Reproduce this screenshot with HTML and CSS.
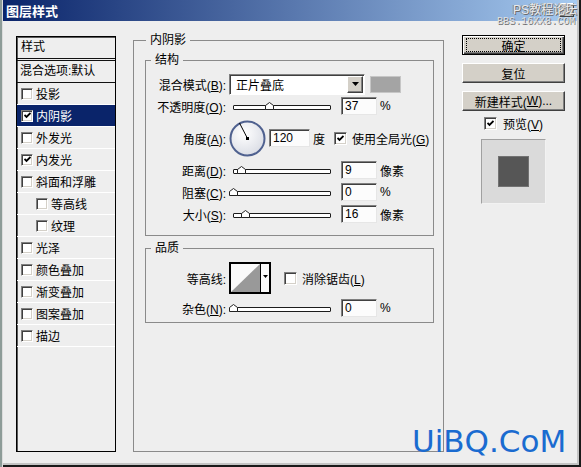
FILE: index.html
```html
<!DOCTYPE html>
<html lang="zh-CN">
<head>
    <meta charset="UTF-8">
    <title>图层样式</title>
    <link rel="stylesheet" href="styles.css">
</head>
<body>
    <div class="window">
        <div class="titlebar">
            <span class="title">图层样式</span>
        </div>

        <div class="dialog">
            <!-- 左侧样式列表 -->
            <div class="style-list">
                <div class="list-head">样式</div>
                <div class="list-blend">混合选项:默认</div>
                <div class="list-item"><span class="cb"></span>投影</div>
                <div class="list-item active"><span class="cb checked"><svg viewBox="0 0 7 7"><polyline points="0.5,3 2.5,5 6.5,1"/></svg></span>内阴影</div>
                <div class="list-item"><span class="cb"></span>外发光</div>
                <div class="list-item"><span class="cb checked"><svg viewBox="0 0 7 7"><polyline points="0.5,3 2.5,5 6.5,1"/></svg></span>内发光</div>
                <div class="list-item"><span class="cb"></span>斜面和浮雕</div>
                <div class="list-item sub"><span class="cb"></span>等高线</div>
                <div class="list-item sub"><span class="cb"></span>纹理</div>
                <div class="list-item"><span class="cb"></span>光泽</div>
                <div class="list-item"><span class="cb"></span>颜色叠加</div>
                <div class="list-item"><span class="cb"></span>渐变叠加</div>
                <div class="list-item"><span class="cb"></span>图案叠加</div>
                <div class="list-item"><span class="cb"></span>描边</div>
            </div>

            <!-- 中间参数面板 -->
            <fieldset class="group main">
                <legend>内阴影</legend>

                <fieldset class="group structure">
                    <legend>结构</legend>

                    <div class="row">
                        <span class="lbl">混合模式(<u>B</u>):</span>
                        <div class="select">
                            <span class="select-text">正片叠底</span>
                            <span class="drop"><svg width="7" height="4" viewBox="0 0 7 4"><polygon points="0,0 7,0 3.5,4"/></svg></span>
                        </div>
                        <span class="swatch"></span>
                    </div>

                    <div class="row">
                        <span class="lbl">不透明度(<u>O</u>):</span>
                        <div class="slider"><div class="track"></div><svg class="thumb" style="left:36px" viewBox="0 0 9 8"><polygon points="0.5,3.5 4.5,0.5 8.5,3.5 8.5,7.5 0.5,7.5"/></svg></div>
                        <span class="num">37</span>
                        <span class="unit">%</span>
                    </div>

                    <div class="row angle-row">
                        <span class="lbl">角度(<u>A</u>):</span>
                        <svg class="dial" width="37" height="37" viewBox="0 0 37 37">
                            <defs>
                                <radialGradient id="dialFill" cx="40%" cy="35%" r="70%">
                                    <stop offset="0" stop-color="#ffffff"/>
                                    <stop offset="1" stop-color="#d9dce4"/>
                                </radialGradient>
                            </defs>
                            <circle cx="18.5" cy="18.5" r="17" fill="url(#dialFill)" stroke="#4f618f" stroke-width="2"/>
                            <line x1="18.5" y1="18.5" x2="10.5" y2="3" stroke="#000" stroke-width="1"/>
                            <rect x="17" y="17" width="3" height="3" fill="#000"/>
                        </svg>
                        <span class="num wide">120</span>
                        <span class="unit">度</span>
                        <span class="cb checked global"><svg viewBox="0 0 7 7"><polyline points="0.5,3 2.5,5 6.5,1"/></svg></span>
                        <span class="cb-text">使用全局光(<u>G</u>)</span>
                    </div>

                    <div class="row">
                        <span class="lbl">距离(<u>D</u>):</span>
                        <div class="slider"><div class="track"></div><svg class="thumb" style="left:8px" viewBox="0 0 9 8"><polygon points="0.5,3.5 4.5,0.5 8.5,3.5 8.5,7.5 0.5,7.5"/></svg></div>
                        <span class="num">9</span>
                        <span class="unit">像素</span>
                    </div>

                    <div class="row">
                        <span class="lbl">阻塞(<u>C</u>):</span>
                        <div class="slider"><div class="track"></div><svg class="thumb" style="left:0px" viewBox="0 0 9 8"><polygon points="0.5,3.5 4.5,0.5 8.5,3.5 8.5,7.5 0.5,7.5"/></svg></div>
                        <span class="num">0</span>
                        <span class="unit">%</span>
                    </div>

                    <div class="row">
                        <span class="lbl">大小(<u>S</u>):</span>
                        <div class="slider"><div class="track"></div><svg class="thumb" style="left:12px" viewBox="0 0 9 8"><polygon points="0.5,3.5 4.5,0.5 8.5,3.5 8.5,7.5 0.5,7.5"/></svg></div>
                        <span class="num">16</span>
                        <span class="unit">像素</span>
                    </div>
                </fieldset>

                <fieldset class="group quality">
                    <legend>品质</legend>

                    <div class="row contour-row">
                        <span class="lbl">等高线:</span>
                        <svg class="contour" width="42" height="32" viewBox="0 0 42 32">
                            <rect x="1" y="1" width="40" height="30" fill="#fafafa" stroke="#000" stroke-width="2"/>
                            <polygon points="2,30 31,2 31,30" fill="#999"/>
                            <line x1="31.5" y1="1" x2="31.5" y2="31" stroke="#000"/>
                            <polygon points="34,13 39,13 36.5,16" fill="#000"/>
                        </svg>
                        <span class="cb antialias"></span>
                        <span class="cb-text">消除锯齿(<u>L</u>)</span>
                    </div>

                    <div class="row noise-row">
                        <span class="lbl">杂色(<u>N</u>):</span>
                        <div class="slider"><div class="track"></div><svg class="thumb" style="left:0px" viewBox="0 0 9 8"><polygon points="0.5,3.5 4.5,0.5 8.5,3.5 8.5,7.5 0.5,7.5"/></svg></div>
                        <span class="num">0</span>
                        <span class="unit">%</span>
                    </div>
                </fieldset>
            </fieldset>

            <!-- 右侧按钮 -->
            <div class="side">
                <div class="btn btn-default"><span class="focus">确定</span></div>
                <div class="btn">复位</div>
                <div class="btn">新建样式(<u>W</u>)...</div>
                <div class="preview-check">
                    <span class="cb checked"><svg viewBox="0 0 7 7"><polyline points="0.5,3 2.5,5 6.5,1"/></svg></span>
                    <span>预览(<u>V</u>)</span>
                </div>
                <div class="preview">
                    <div class="preview-swatch"></div>
                </div>
            </div>
        </div>

        <!-- 水印 -->
        <span class="close-box"></span>
        <span class="mark-top">PS教程论坛</span>
        <span class="mark-bbs">BBS.16XX8.COM</span>
        <span class="mark-uibq">UiBQ.CoM</span>
    </div>
</body>
</html>
```

FILE: styles.css
```css
body {
    margin: 0;
    font-family: "Liberation Sans", "Noto Sans CJK SC", sans-serif;
    font-size: 12px;
    color: #000;
}

.window {
    position: relative;
    width: 581px;
    height: 467px;
    box-sizing: border-box;
    padding: 0 4px 4px 0;
    border-left: 2px solid #8d9c98;
    background: #eeeeee;
    box-shadow: inset 1px 0 0 #dcdcdc, inset -2px -2px 0 #1a1a1a, inset -4px -4px 0 #c4c4c4;
    display: flex;
    flex-direction: column;
    overflow: hidden;
}

.titlebar {
    height: 21px;
    margin-left: 1px;
    padding-left: 3px;
    display: flex;
    align-items: center;
    background: linear-gradient(to right, #0a246a, #a6caf0);
    color: #fff;
    font-weight: bold;
    font-size: 13px;
}

.dialog {
    display: flex;
    align-items: flex-start;
    padding: 15px 0 0 14px;
}

/* 样式列表 */
.style-list {
    width: 100px;
    height: 416px;
    box-sizing: border-box;
    border: 1px solid #000;
    box-shadow: inset 1px 1px 0 #5a5a5a;
    margin-right: 17px;
    flex: none;
}

.list-head {
    height: 21px;
    line-height: 21px;
    padding-left: 4px;
    border-bottom: 3px double #111;
}

.list-blend {
    height: 21px;
    line-height: 21px;
    padding-left: 3px;
    border-bottom: 1px solid #111;
}

.list-item {
    height: 21px;
    display: flex;
    align-items: center;
    gap: 3px;
    padding-left: 4px;
    border-bottom: 1px solid #fff;
}

.list-item.sub {
    padding-left: 19px;
}

.list-item.active {
    background: #0a246a;
    color: #fff;
}

/* 复选框 */
.cb {
    width: 13px;
    height: 13px;
    box-sizing: border-box;
    flex: none;
    border: 1px solid;
    border-color: #808080 #fff #fff #808080;
    box-shadow: inset 1px 1px 0 #404040, inset -1px -1px 0 #d4d0c8;
    background: #fff;
    display: inline-flex;
    align-items: center;
    justify-content: center;
}

.cb svg {
    width: 7px;
    height: 7px;
    fill: none;
    stroke: #000;
    stroke-width: 1.8;
}

.style-list .cb {
    width: 12px;
    height: 12px;
}

/* 分组框 */
.group {
    margin: 0;
    padding: 0;
    min-inline-size: 0;
    border: 1px solid #8a8a8a;
}

.group legend {
    padding: 0 4px;
    line-height: 12px;
}

.main {
    width: 311px;
    height: 418px;
    box-sizing: border-box;
    margin-top: -2px;
    margin-right: 18px;
    padding: 8px 9px 0 11px;
    flex: none;
}

.main > legend {
    margin-left: 1px;
}

.structure {
    padding: 7px 0 10px 0;
}

.structure > legend,
.quality > legend {
    margin-left: 5px;
}

.quality {
    margin-top: 6px;
    padding: 8px 0 3px 0;
}

.row {
    height: 22px;
    display: flex;
    align-items: center;
}

.angle-row {
    height: 38px;
    margin: 2px 0;
}

.contour-row {
    height: 32px;
}

.noise-row {
    margin-top: 3px;
}

.lbl {
    width: 80px;
    flex: none;
    text-align: right;
    margin-right: 3px;
    white-space: nowrap;
}

/* 下拉框 */
.select {
    width: 136px;
    height: 21px;
    box-sizing: border-box;
    border: 1px solid;
    border-color: #808080 #fff #fff #808080;
    box-shadow: inset 1px 1px 0 #404040;
    background: #fff;
    display: flex;
    align-items: center;
    padding-left: 6px;
}

.select-text {
    flex: 1;
}

.drop {
    width: 16px;
    height: 17px;
    box-sizing: border-box;
    margin-right: 1px;
    background: #d4d0c8;
    border: 1px solid;
    border-color: #fff #404040 #404040 #fff;
    box-shadow: inset -1px -1px 0 #808080;
    display: flex;
    align-items: center;
    justify-content: center;
}

.swatch {
    width: 31px;
    height: 17px;
    box-sizing: border-box;
    margin-left: 5px;
    background: #a4a4a4;
    border: 1px solid #c6c6c6;
}

/* 滑块 */
.slider {
    position: relative;
    width: 102px;
    height: 8px;
    flex: none;
}

.track {
    margin: 3px 0 0 4px;
    height: 5px;
    box-sizing: border-box;
    border: 1px solid #1c1c1c;
    border-radius: 1px;
    background: #fff;
}

.thumb {
    position: absolute;
    top: 0;
    width: 9px;
    height: 8px;
    fill: #fff;
    stroke: #222;
    stroke-width: 1;
}

/* 数值框 */
.num {
    width: 36px;
    height: 18px;
    box-sizing: border-box;
    margin-left: 10px;
    padding-left: 3px;
    border: 1px solid;
    border-color: #808080 #e6e6e6 #e6e6e6 #808080;
    box-shadow: inset 1px 1px 0 #404040;
    background: #fcfcfc;
    line-height: 16px;
    flex: none;
}

.num.wide {
    width: 41px;
    margin-left: 3px;
}

.unit {
    margin-left: 3px;
}

.dial {
    flex: none;
}

.global {
    margin-left: 9px;
}

.cb-text {
    margin-left: 5px;
}

.contour {
    flex: none;
}

.antialias {
    margin-left: 13px;
}

/* 右侧按钮 */
.side {
    width: 103px;
    margin-top: -1px;
    display: flex;
    flex-direction: column;
    flex: none;
}

.btn {
    height: 20px;
    box-sizing: border-box;
    margin-bottom: 8px;
    background: #d4d0c8;
    border: 1px solid;
    border-color: #fff #404040 #404040 #fff;
    box-shadow: inset -1px -1px 0 #808080;
    display: flex;
    align-items: center;
    justify-content: center;
}

.btn-default {
    border-color: #000;
    box-shadow: inset 1px 1px 0 #fff, inset -1px -1px 0 #404040, inset -2px -2px 0 #808080;
}

.btn-default .focus {
    flex: 1;
    align-self: stretch;
    margin: 2px 3px;
    border: 1px dotted #000;
    display: flex;
    align-items: center;
    justify-content: center;
}

.preview-check {
    margin-top: -2px;
    display: flex;
    align-items: center;
    justify-content: center;
    gap: 6px;
    height: 13px;
}

.preview {
    align-self: center;
    width: 65px;
    height: 65px;
    box-sizing: border-box;
    margin-top: 9px;
    background: #dadada;
    border: 1px solid;
    border-color: #a0a0a0 #f2f2f2 #f2f2f2 #a0a0a0;
    display: flex;
    align-items: center;
    justify-content: center;
}

.preview-swatch {
    width: 31px;
    height: 31px;
    box-sizing: border-box;
    background: #565656;
    border: 1px solid #727272;
}

/* 水印 */
.close-box {
    position: absolute;
    left: 557px;
    top: 3px;
    width: 15px;
    height: 14px;
    box-sizing: border-box;
    background: #c8c8c8;
    border: 1px solid;
    border-color: #fff #404040 #404040 #fff;
}

.mark-top {
    position: absolute;
    left: 511px;
    top: 3px;
    line-height: 14px;
    color: #eaeaea;
    text-shadow: 1px 1px 0 #6a6a6a, -1px 0 0 #8a8a8a;
}

.mark-bbs {
    position: absolute;
    left: 495px;
    top: 17px;
    font-family: "Liberation Mono", monospace;
    font-size: 10px;
    line-height: 10px;
    color: #e0e0e0;
    text-shadow: 1px 1px 0 #707070;
}

.mark-uibq {
    position: absolute;
    left: 410px;
    top: 426px;
    font-family: "DejaVu Sans", sans-serif;
    font-size: 31px;
    line-height: 31px;
    color: #1a6bd0;
}
```
